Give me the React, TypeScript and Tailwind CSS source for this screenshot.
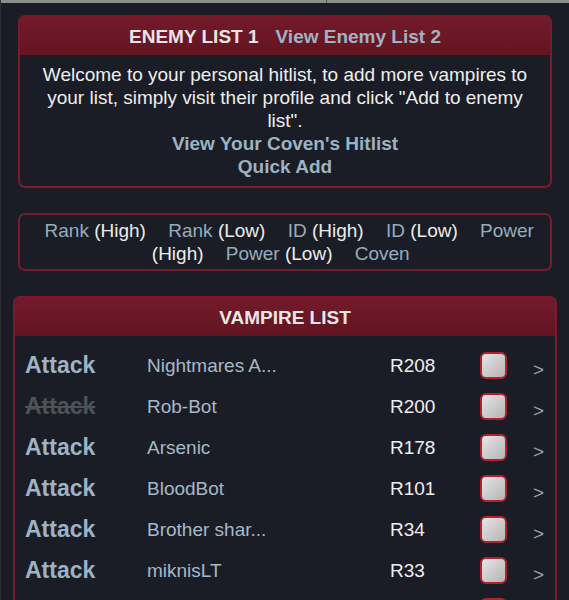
import React from 'react';

const sorts = [
  ['Rank', '(High)'],
  ['Rank', '(Low)'],
  ['ID', '(High)'],
  ['ID', '(Low)'],
  ['Power', '(High)'],
  ['Power', '(Low)'],
  ['Coven', ''],
];

const vampires = [
  { name: 'Nightmares A...', rank: 'R208', canAttack: true },
  { name: 'Rob-Bot', rank: 'R200', canAttack: false },
  { name: 'Arsenic', rank: 'R178', canAttack: true },
  { name: 'BloodBot', rank: 'R101', canAttack: true },
  { name: 'Brother shar...', rank: 'R34', canAttack: true },
  { name: 'miknisLT', rank: 'R33', canAttack: true },
  { name: 'Vexx', rank: 'R29', canAttack: true },
];

function PanelHeader({ children }: { children: React.ReactNode }) {
  return (
    <div className="flex h-[38px] items-center justify-center rounded-t-[5px] bg-gradient-to-b from-[#731a2b] to-[#631421] text-[19px] font-bold leading-[23px]">
      {children}
    </div>
  );
}

export default function App() {
  return (
    <div
      className="min-h-[600px] border-l border-[#2c2e36] bg-[#1b1d26] pb-6 text-[19px] leading-[23px] text-[#eeeeee]"
      style={{ fontFamily: '"Liberation Sans", Arial, sans-serif' }}
    >
      {/* browser chrome strip */}
      <div className="flex h-[3px] bg-[#8d8d8d]">
        <div className="w-[325px]" />
        <div className="w-px bg-[#5a5a5a]" />
      </div>

      {/* enemy list intro */}
      <div className="mx-[17px] mt-[12px] rounded-[7px] border-2 border-[#7a1a2c]">
        <PanelHeader>
          <span className="text-[#e9e4e6]">ENEMY LIST 1</span>
          <span className="ml-[17px] text-[#9fb3c3]">View Enemy List 2</span>
        </PanelHeader>
        <div className="px-[10px] py-2 text-center">
          <p>
            Welcome to your personal hitlist, to add more vampires to your list, simply visit their
            profile and click "Add to enemy list".
          </p>
          <p className="font-bold text-[#9cb3c3]">View Your Coven's Hitlist</p>
          <p className="font-bold text-[#9cb3c3]">Quick Add</p>
        </div>
      </div>

      {/* sort links */}
      <div className="mx-[17px] mt-[25px] rounded-[7px] border-2 border-[#7a1a2c] px-[10px] py-1 text-center">
        {sorts.map(([label, dir], i) => (
          <React.Fragment key={i}>
            <span className="mx-[8.5px]">
              <span className="text-[#96adbd]">{label}</span>
              {dir && <span className="text-[#ececec]"> {dir}</span>}
            </span>{' '}
          </React.Fragment>
        ))}
      </div>

      {/* vampire list */}
      <div className="mx-[12px] mt-[25px] rounded-[7px] border-2 border-[#7a1a2c]">
        <PanelHeader>
          <span className="text-[#ebe6e8]">VAMPIRE LIST</span>
        </PanelHeader>
        <div className="pt-[9px]">
          {vampires.map((v) => (
            <div key={v.name} className="flex h-[41px] items-center pl-[10px]">
              <span
                className={`w-[122px] text-[23px] font-bold ${
                  v.canAttack ? 'text-[#9cb4c5]' : 'text-[#4e535a] line-through'
                }`}
              >
                Attack
              </span>
              <span className="w-[243px] text-[#a7b8c6]">{v.name}</span>
              <span className="w-[90px] text-[#eeeeee]">{v.rank}</span>
              <span className="h-[27px] w-[27px] rounded-[6px] border-2 border-[#b3202f] bg-gradient-to-br from-[#e6e6e6] to-[#b4b4b4]" />
              <span className="ml-[26px] mt-[8px] text-[19px] text-[#9aa3ad]">&gt;</span>
            </div>
          ))}
        </div>
      </div>
    </div>
  );
}
